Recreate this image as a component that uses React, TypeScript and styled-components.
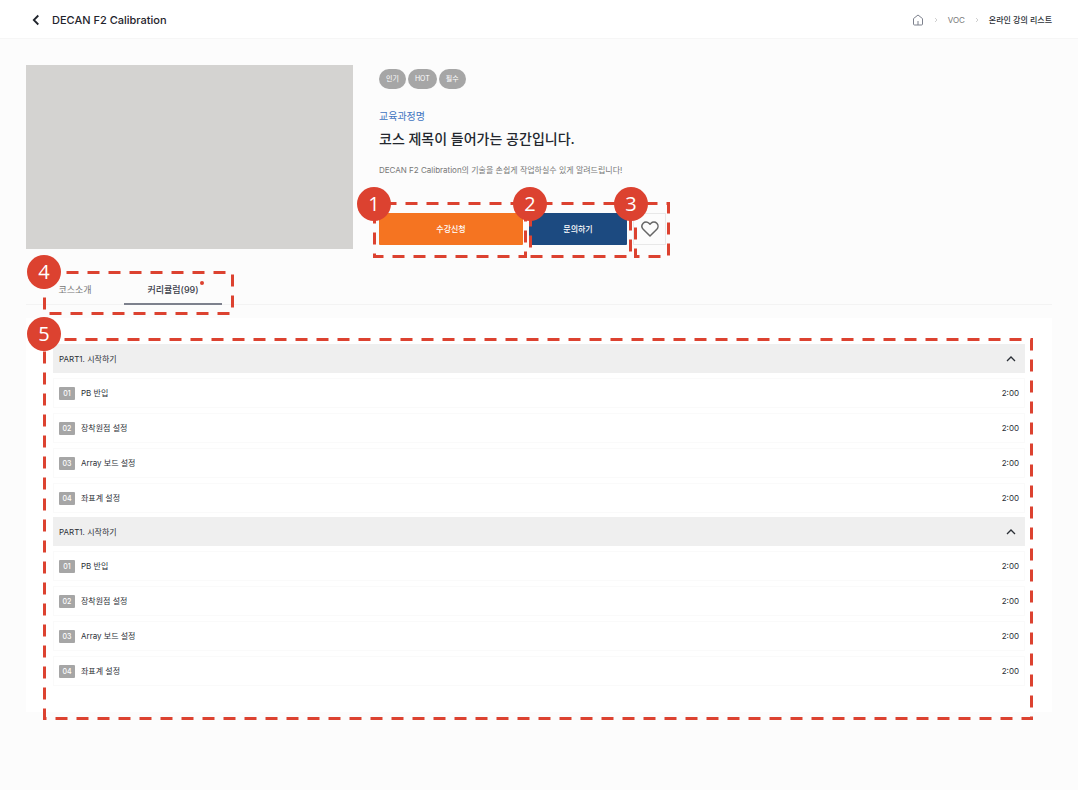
import React, { useState } from "react";
import styled, { createGlobalStyle } from "styled-components";

const red = "#dc4230";

const GlobalStyle = createGlobalStyle`
  *, *::before, *::after { box-sizing: border-box; }
  body {
    margin: 0;
    background: #fff;
    color: #2b2f36;
    font-family: Inter, "Noto Sans CJK KR", sans-serif;
    font-size: 8px;
    line-height: 12px;
  }
  h1, h2, p, ul, ol { margin: 0; padding: 0; }
  ul, ol { list-style: none; }
  a { color: inherit; text-decoration: none; }
  button { font: inherit; color: inherit; border: 0; padding: 0; background: none; cursor: pointer; }
  svg { display: block; }
`;

const Page = styled.div`
  background: #fcfcfc;
`;

const Header = styled.header`
  display: flex;
  align-items: center;
  justify-content: space-between;
  height: 39px;
  padding: 2px 26px 0;
  background: #fff;
  border-bottom: 1px solid #f6f6f6;
`;

const TitleGroup = styled.div`
  display: flex;
  align-items: center;
  gap: 6px;
`;

const BackButton = styled.button`
  display: flex;
  align-items: center;
  justify-content: center;
  width: 20px;
  height: 20px;
`;

const PageTitle = styled.h1`
  font-size: 11px;
  line-height: 16px;
  font-weight: 500;
  color: #1f242c;
`;

const Crumbs = styled.ol`
  display: flex;
  align-items: center;
  gap: 10px;
  color: #777;

  li { display: flex; align-items: center; }
  [aria-current] { color: #2b2f36; font-weight: 500; }
`;

const Main = styled.main`
  padding: 26px 26px 78px;
`;

const Course = styled.section`
  display: flex;
  gap: 26px;
`;

const Thumbnail = styled.div`
  flex: 0 0 327px;
  height: 184px;
  background: #d4d3d1;
`;

const Info = styled.div`
  flex: 1;
  min-width: 0;
  padding-top: 4px;
`;

const Tags = styled.ul`
  display: flex;
  gap: 2px;
`;

const Tag = styled.li`
  height: 20px;
  padding: 0 7px;
  border-radius: 10px;
  background: #a6a6a6;
  color: #fff;
  font-size: 7px;
  line-height: 20px;
`;

const Category = styled.p`
  margin-top: 19px;
  font-size: 10px;
  line-height: 16px;
  color: #3f74c0;
`;

const CourseTitle = styled.h2`
  margin-top: 4px;
  font-size: 14px;
  line-height: 22px;
  font-weight: 500;
  color: #23272e;
`;

const Description = styled.p`
  margin-top: 14px;
  line-height: 12px;
  color: #777;
`;

const Actions = styled.div`
  display: flex;
  gap: 6px;
  margin-top: 37px;
`;

const Marked = styled.div`
  position: relative;
`;

const ActionButton = styled.button<{ $color: string; $width: number }>`
  display: block;
  width: ${(p) => p.$width}px;
  height: 32px;
  border-radius: 1px;
  background: ${(p) => p.$color};
  color: #fff;
  font-weight: 500;
`;

const LikeButton = styled.button`
  display: flex;
  align-items: center;
  justify-content: center;
  width: 33px;
  height: 32px;
  border: 1px solid #e8e8e8;
`;

const TabBar = styled.div`
  display: flex;
  margin-top: 26px;
  border-bottom: 1px solid #f3f3f3;
`;

const TabGroup = styled(Marked)`
  display: flex;
`;

const Tab = styled.button<{ $active: boolean }>`
  width: 98px;
  height: 30px;
  margin-bottom: -1px;
  padding-top: 2px;
  border-bottom: 2px solid ${(p) => (p.$active ? "#7d818d" : "transparent")};
  color: ${(p) => (p.$active ? "#3c414b" : "#777")};
  font-size: 9px;
  font-weight: ${(p) => (p.$active ? 500 : 400)};
`;

const TabLabel = styled.span`
  position: relative;
`;

const NewDot = styled.span`
  position: absolute;
  top: -3px;
  right: -5px;
  width: 4px;
  height: 4px;
  border-radius: 50%;
  background: ${red};
`;

const Panel = styled.section`
  position: relative;
  margin-top: 13px;
  padding: 26px 27px;
  background: #fff;
`;

const Parts = styled.div`
  display: grid;
  gap: 4px;
`;

const PartHeader = styled.button`
  display: flex;
  align-items: center;
  justify-content: space-between;
  width: 100%;
  height: 29px;
  padding: 0 9px 0 6px;
  background: #efefef;
`;

const Lessons = styled.ul`
  display: grid;
  gap: 5px;
  margin-top: 5px;
`;

const Lesson = styled.li`
  display: flex;
  align-items: center;
  gap: 6px;
  height: 30px;
  padding: 0 5px;
  border: 1px solid #fafafa;
`;

const LessonNumber = styled.span`
  width: 16px;
  height: 13px;
  border-radius: 1px;
  background: #a6a6a6;
  color: #fff;
  font-size: 7px;
  line-height: 13px;
  font-weight: 500;
  text-align: center;
`;

const Duration = styled.time`
  margin-left: auto;
`;

type Box = { top: number; right: number; bottom: number; left: number };

const Outline = styled.div<{ $box: Box }>`
  position: absolute;
  top: ${(p) => p.$box.top}px;
  right: ${(p) => p.$box.right}px;
  bottom: ${(p) => p.$box.bottom}px;
  left: ${(p) => p.$box.left}px;
  z-index: 1;
  pointer-events: none;

  svg { width: 100%; height: 100%; overflow: visible; }
  rect {
    width: calc(100% - 3px);
    height: calc(100% - 3px);
    fill: none;
    stroke: ${red};
    stroke-width: 3px;
    stroke-dasharray: 12 9;
  }
`;

const Marker = styled.span<{ $x: number; $y: number }>`
  position: absolute;
  left: ${(p) => p.$x}px;
  top: ${(p) => p.$y}px;
  z-index: 2;
  width: 34px;
  height: 34px;
  border-radius: 50%;
  background: ${red};
  color: #fff;
  font: 20px/33px "Open Sans", sans-serif;
  text-align: center;
  pointer-events: none;
`;

type CalloutProps = { n: number; box: Box; x?: number; y?: number; offset?: number };

function Callout({ n, box, x = -16, y = -15, offset = 0 }: CalloutProps) {
  return (
    <Outline $box={box}>
      <svg aria-hidden="true">
        <rect x="1.5" y="1.5" strokeDashoffset={offset} />
      </svg>
      <Marker $x={x} $y={y}>{n}</Marker>
    </Outline>
  );
}

const Separator = () => (
  <svg width="4" height="6" viewBox="0 0 4 6" fill="none" stroke="#d0d0d0" aria-hidden="true">
    <path d="M1 1l2 2-2 2" />
  </svg>
);

const lessons = ["PB 반입", "장착원점 설정", "Array 보드 설정", "좌표계 설정"];

function Part() {
  const [open, setOpen] = useState(true);
  return (
    <div>
      <PartHeader aria-expanded={open} onClick={() => setOpen(!open)}>
        PART1. 시작하기
        <svg width="10" height="6" viewBox="0 0 10 6" fill="none" stroke="#2b2f36" strokeWidth="1.3" aria-hidden="true">
          <path d={open ? "M1 5l4-4 4 4" : "M1 1l4 4 4-4"} />
        </svg>
      </PartHeader>
      {open && (
        <Lessons>
          {lessons.map((name, i) => (
            <Lesson key={name}>
              <LessonNumber>0{i + 1}</LessonNumber>
              {name}
              <Duration>2:00</Duration>
            </Lesson>
          ))}
        </Lessons>
      )}
    </div>
  );
}

export default function App() {
  const [tab, setTab] = useState(1);
  return (
    <Page>
      <GlobalStyle />
      <Header>
        <TitleGroup>
          <BackButton aria-label="뒤로">
            <svg width="8" height="12" viewBox="0 0 8 12" fill="none" stroke="#1f242c" strokeWidth="1.8">
              <path d="M6.300 1.500L1.800 6l4.500 4.500" />
            </svg>
          </BackButton>
          <PageTitle>DECAN F2 Calibration</PageTitle>
        </TitleGroup>
        <nav>
          <Crumbs>
            <li>
              <a href="#home" aria-label="홈">
                <svg width="12" height="12" viewBox="0 0 12 12" fill="none" stroke="#7d818d" strokeLinejoin="round">
                  <path d="M1.500 4.600L6 1l4.500 3.600V10q0 1-1 1h-7q-1 0-1-1zM6 7v4" />
                </svg>
              </a>
            </li>
            <li><Separator /></li>
            <li><a href="#voc">VOC</a></li>
            <li><Separator /></li>
            <li><a href="#lectures" aria-current="page">온라인 강의 리스트</a></li>
          </Crumbs>
        </nav>
      </Header>
      <Main>
        <Course>
          <Thumbnail />
          <Info>
            <Tags>
              <Tag>인기</Tag>
              <Tag>HOT</Tag>
              <Tag>필수</Tag>
            </Tags>
            <Category>교육과정명</Category>
            <CourseTitle>코스 제목이 들어가는 공간입니다.</CourseTitle>
            <Description>DECAN F2 Calibration의 기술을 손쉽게 작업하실수 있게 알려드립니다!</Description>
            <Actions>
              <Marked>
                <ActionButton $color="#f57421" $width={144}>수강신청</ActionButton>
                <Callout n={1} box={{ top: -11, right: -4, bottom: -13, left: -6 }} offset={-10} />
              </Marked>
              <Marked>
                <ActionButton $color="#1c4a80" $width={98}>문의하기</ActionButton>
                <Callout n={2} box={{ top: -11, right: -5, bottom: -13, left: 0 }} offset={-10} />
              </Marked>
              <Marked>
                <LikeButton aria-label="찜하기">
                  <svg width="18" height="16" viewBox="0 0 18 16" fill="none" stroke="#666" strokeWidth="1.5" strokeLinejoin="round">
                    <path d="M9 15L2.200 8.300C.6 6.600.6 4 2.200 2.300S6.400.7 8 2.300l1 1 1-1c1.600-1.600 4.200-1.600 5.800 0s1.600 4.300 0 6z" />
                  </svg>
                </LikeButton>
                <Callout n={3} box={{ top: -11, right: -4, bottom: -13, left: 1 }} x={-20} offset={-10} />
              </Marked>
            </Actions>
          </Info>
        </Course>
        <TabBar>
          <TabGroup role="tablist">
            <Tab role="tab" aria-selected={tab === 0} $active={tab === 0} onClick={() => setTab(0)}>
              코스소개
            </Tab>
            <Tab role="tab" aria-selected={tab === 1} $active={tab === 1} onClick={() => setTab(1)}>
              <TabLabel>
                커리큘럼(99)
                <NewDot />
              </TabLabel>
            </Tab>
            <Callout n={4} box={{ top: -4, right: -12, bottom: -11, left: 17 }} y={-16} offset={-1} />
          </TabGroup>
        </TabBar>
        <Panel>
          <Parts>
            <Part />
            <Part />
          </Parts>
          <Callout n={5} box={{ top: 20, right: 19, bottom: -8, left: 17 }} y={-21} offset={1} />
        </Panel>
      </Main>
    </Page>
  );
}
